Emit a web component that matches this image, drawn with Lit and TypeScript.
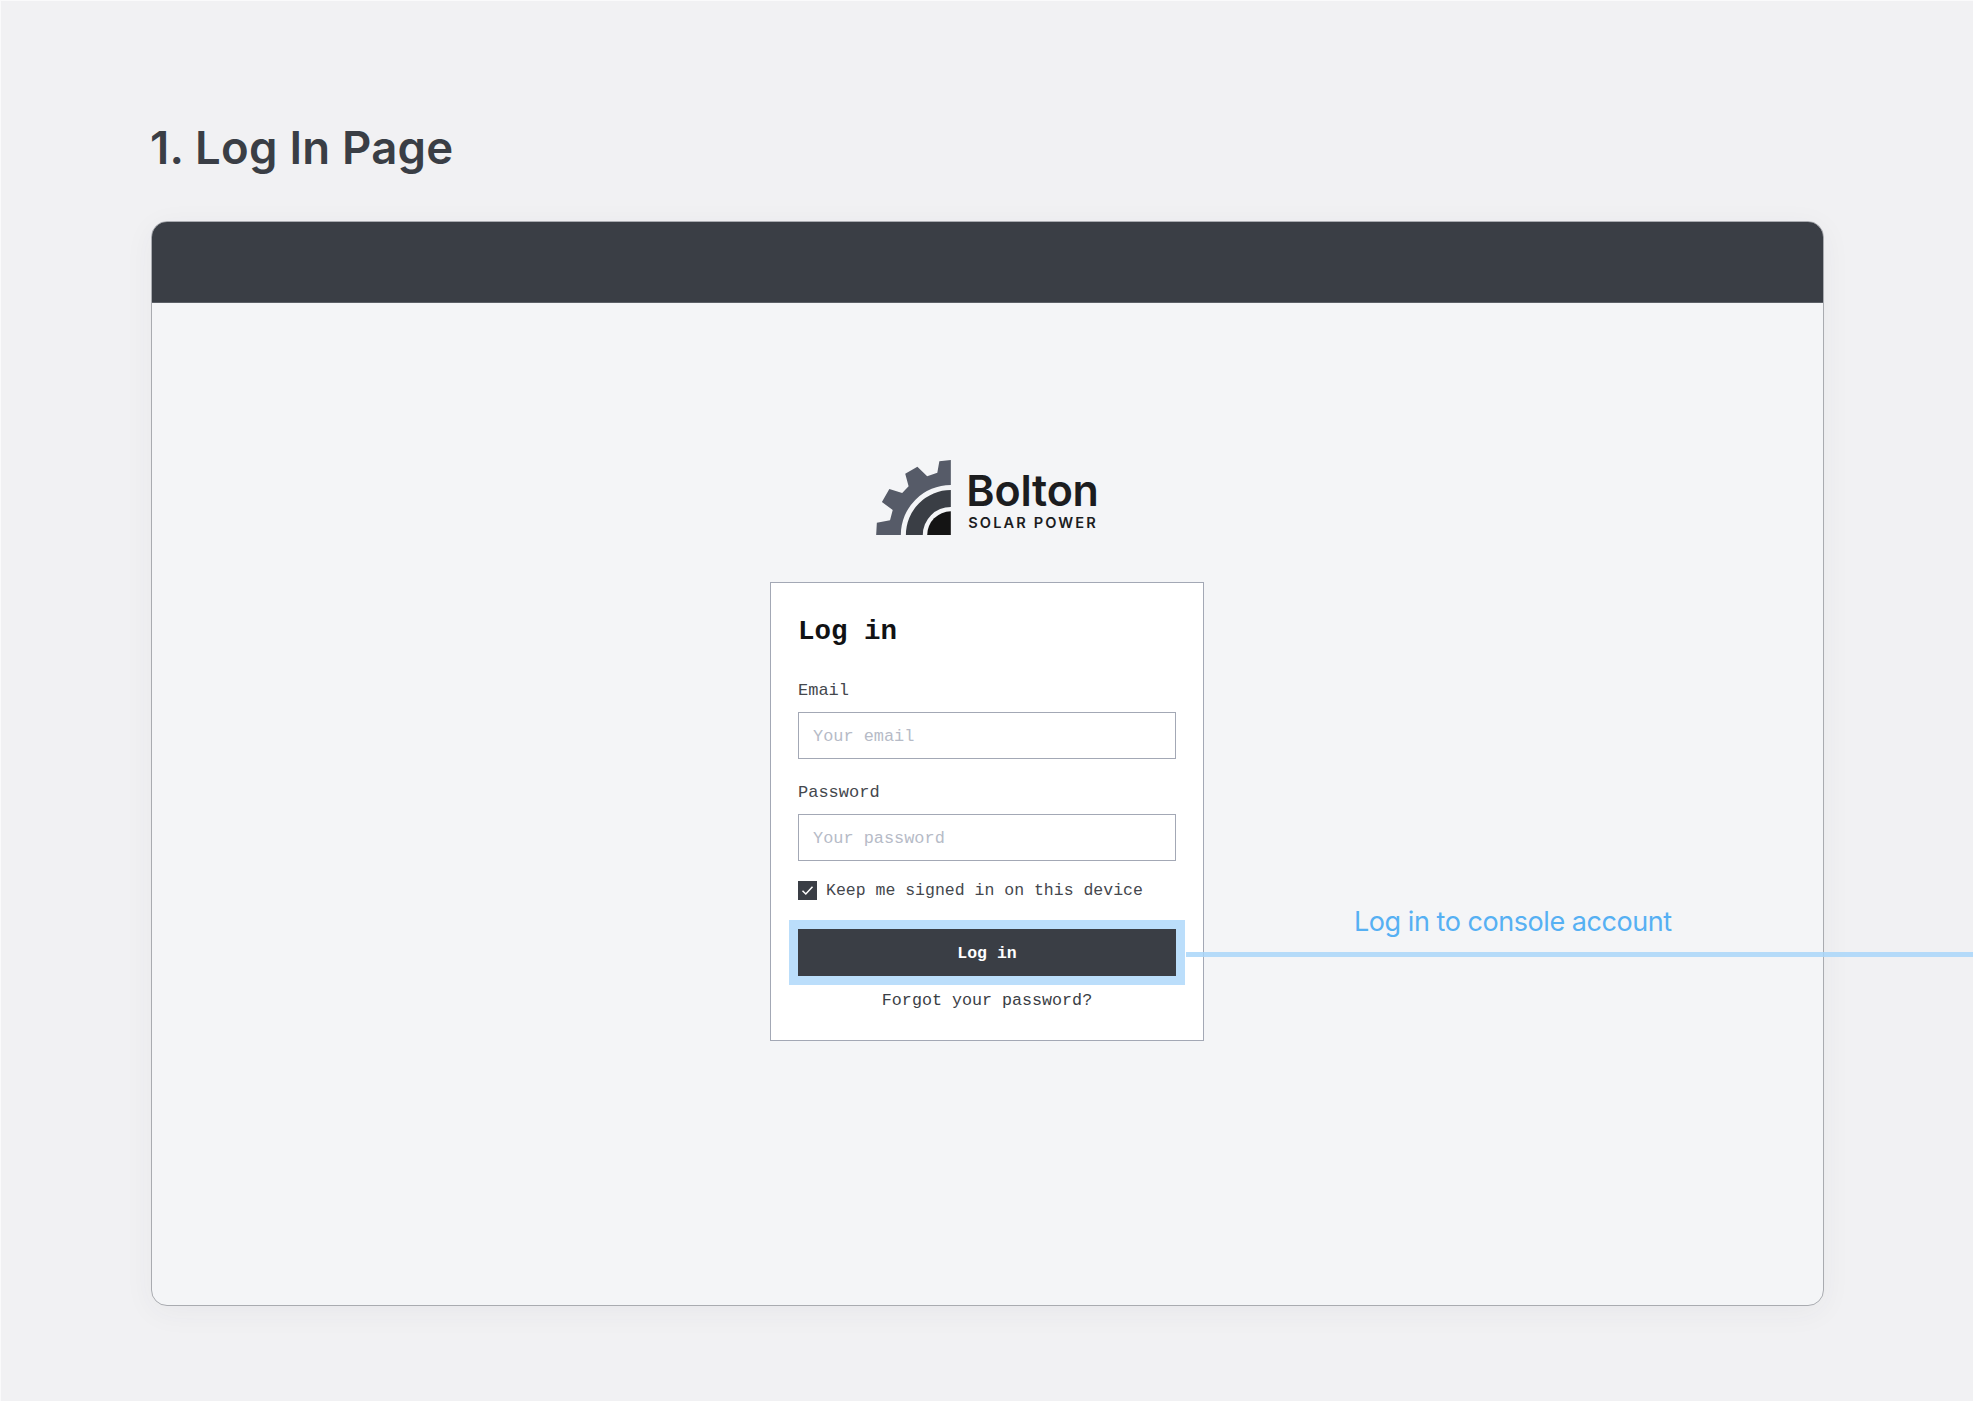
import { LitElement, html, css } from "lit";
import { customElement } from "lit/decorators.js";

@customElement("app-root")
export class AppRoot extends LitElement {
  static styles = css`
    :host {
      display: block;
      position: relative;
      width: 1973px;
      height: 1401px;
      overflow: hidden;
      background: #f1f1f3;
      box-shadow: inset 1px 1px 0 #fafafb;
      font-family: "Liberation Mono", monospace;
      color: #3a3e45;
    }
    .page {
      box-sizing: border-box;
      height: 100%;
      padding: 121px 149px 0 151px;
      display: flex;
      flex-direction: column;
    }
    h1 {
      margin: 0 0 46px -1px;
      font: 600 45.5px/54px Inter, sans-serif;
      letter-spacing: 0.25px;
      color: #3a3e45;
    }
    .frame {
      box-sizing: border-box;
      height: 1085px;
      border: 1px solid #a9abb0;
      border-radius: 16px;
      background: #f4f5f7;
      box-shadow: 0 6px 30px rgba(60, 60, 70, 0.05);
      display: flex;
      flex-direction: column;
      align-items: center;
      overflow: hidden;
    }
    .bar {
      align-self: stretch;
      flex: none;
      height: 81px;
      background: #3a3e45;
      border-bottom: 1px solid #5c6067;
      margin: -1px -1px 0;
    }
    .logo {
      display: flex;
      align-items: flex-end;
      gap: 15px;
      margin: 157px 0 0 0;
      height: 75px;
    }
    .logo svg { display: block; width: 75px; height: 75px; }
    .wordmark {
      display: flex;
      flex-direction: column;
      align-items: flex-start;
      padding-bottom: 3px;
      color: #1c1d1f;
      font-family: Inter, sans-serif;
    }
    .brand {
      font-size: 43px;
      line-height: 44px;
      margin-bottom: 2px;
      font-weight: 600;
      letter-spacing: -0.2px;
    }
    .sub {
      font-size: 14.6px;
      line-height: 18px;
      font-weight: 600;
      letter-spacing: 2.1px;
      margin-left: 2px;
    }
    .card {
      box-sizing: border-box;
      width: 434px;
      margin: 47px 1px 0 0;
      padding: 33px 27px 29px;
      background: #fff;
      border: 1px solid #a3a8b5;
      display: flex;
      flex-direction: column;
    }
    h2 {
      margin: 0 0 33px;
      font: 700 27.5px/32px "Liberation Mono", monospace;
      color: #111214;
    }
    label { font-size: 17px; line-height: 20px; }
    .forgot { font-size: 16.7px; line-height: 20px; }
    .keep { font-size: 16.5px; line-height: 20px; }
    label { display: block; color: #44474d; margin-bottom: 11px; }
    .pw { margin-top: 24.5px; }
    input[type="text"], input[type="password"] {
      box-sizing: border-box;
      display: block;
      width: 378px;
      height: 46.5px;
      padding: 2px 14px 0;
      border: 1px solid #a3a8b5;
      border-radius: 0;
      background: #fff;
      outline: none;
      font: 16.9px "Liberation Mono", monospace;
    }
    input::placeholder { color: #b6bbc7; opacity: 1; }
    .keep {
      display: flex;
      align-items: center;
      gap: 9px;
      margin-top: 20px;
      height: 19px;
      color: #44474d;
    }
    .keep-text { padding-top: 2px; }
    .check {
      width: 19px;
      height: 19px;
      flex: none;
      background: #3a3e45;
      display: flex;
      align-items: center;
      justify-content: center;
    }
    .check svg { width: 13px; height: 11px; display: block; }
    button {
      display: block;
      width: 378px;
      height: 47px;
      margin-top: 29px;
      border: 0;
      padding: 2px 0 0;
      background: #3a3e45;
      color: #fff;
      font: 700 16.5px "Liberation Mono", monospace;
      box-shadow: 0 0 0 9px #bbdefb;
    }
    .forgot { margin-top: 15px; text-align: center; color: #3a3e45; }
    .line {
      position: absolute;
      left: 1186px;
      right: 0;
      top: 952px;
      height: 5px;
      background: #a9d6f9;
      opacity: 0.85;
    }
    .note {
      position: absolute;
      left: 1354px;
      top: 905px;
      font: 400 27px/34px Inter, sans-serif;
      letter-spacing: -0.45px;
      color: #56b0f3;
      white-space: nowrap;
    }
  `;

  render() {
    return html`
      <div class="page">
        <h1>1. Log In Page</h1>
        <div class="frame">
          <div class="bar"></div>
          <div class="logo">
            <svg viewBox="81 62 221 222" aria-hidden="true">
              <path fill="#565b68" d="M302 62 268 66 262 100 232 110 203 82 167 103 177 140 158 160 120 148 98 186 130 210 122 240 83 248 81 284H154A148 148 0 0 1 302 136Z"/>
              <path fill="#3a3e45" d="M169 284A133 133 0 0 1 302 151V201A83 83 0 0 0 219 284Z"/>
              <path fill="#141414" d="M232 284A70 70 0 0 1 302 214V284Z"/>
            </svg>
            <div class="wordmark">
              <span class="brand">Bolton</span>
              <span class="sub">SOLAR POWER</span>
            </div>
          </div>
          <div class="card">
            <h2>Log in</h2>
            <label for="e">Email</label>
            <input id="e" type="text" placeholder="Your email" />
            <label class="pw" for="p">Password</label>
            <input id="p" type="password" placeholder="Your password" />
            <div class="keep">
              <span class="check">
                <svg viewBox="0 0 13 11"><path d="M1.5 5.8 4.8 9 11.5 1.8" fill="none" stroke="#fff" stroke-width="1.5"/></svg>
              </span>
              <span class="keep-text">Keep me signed in on this device</span>
            </div>
            <button>Log in</button>
            <div class="forgot">Forgot your password?</div>
          </div>
        </div>
      </div>
      <div class="line"></div>
      <div class="note">Log in to console account</div>
    `;
  }
}
